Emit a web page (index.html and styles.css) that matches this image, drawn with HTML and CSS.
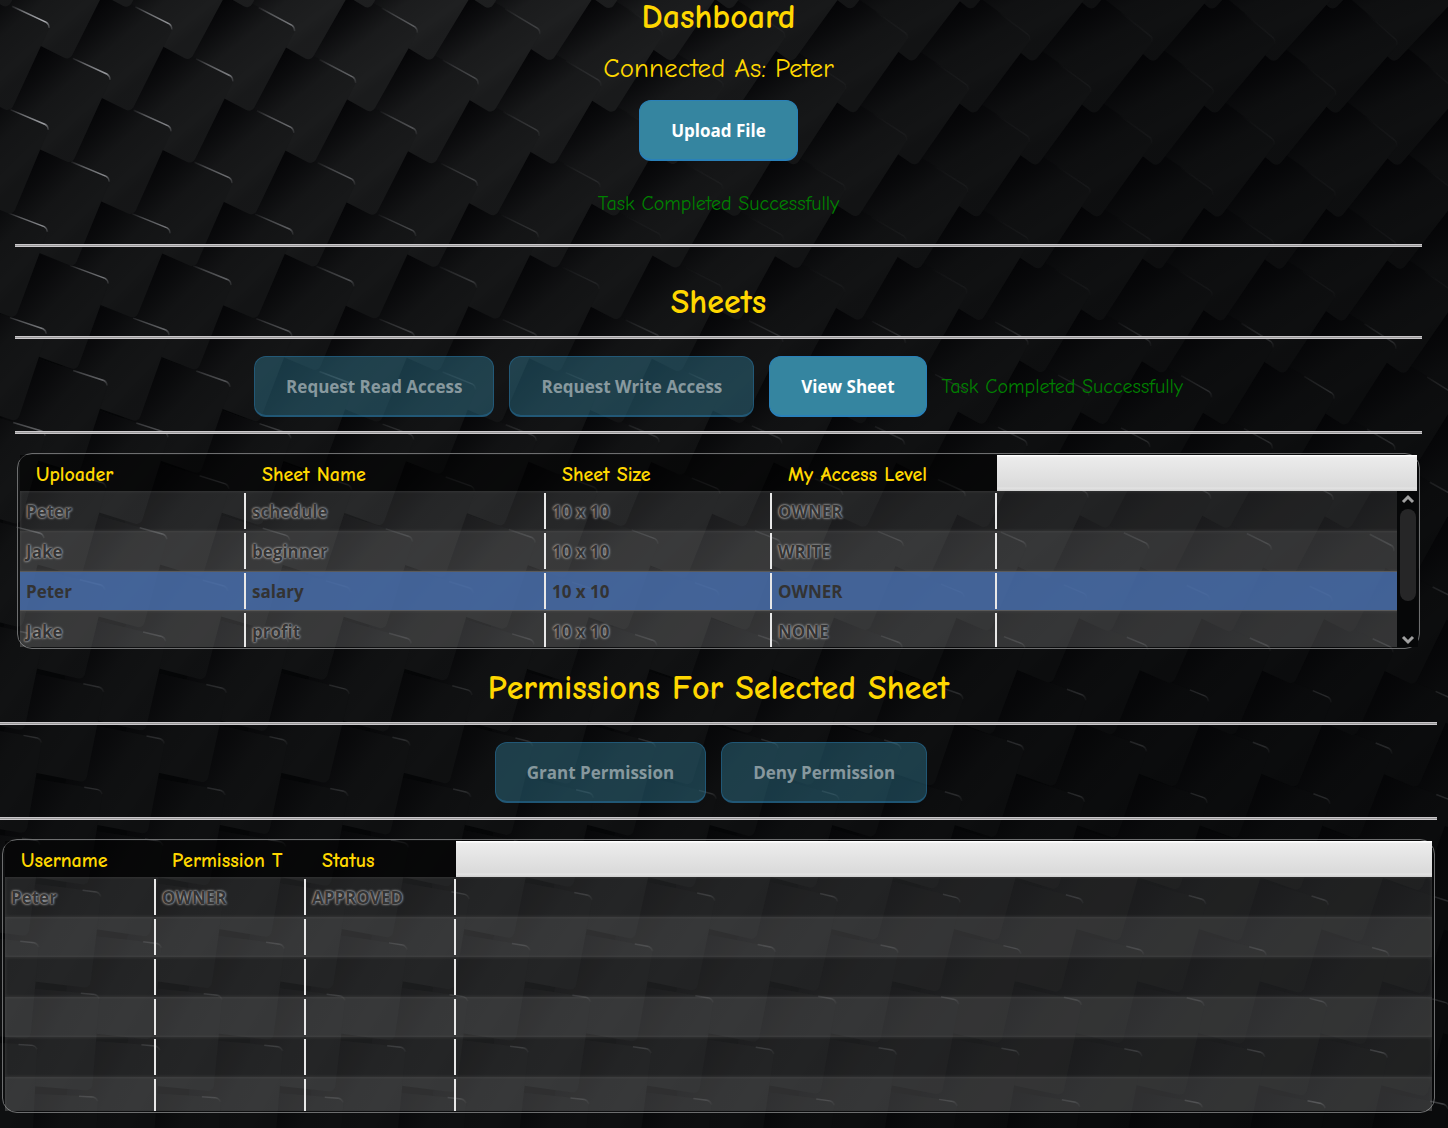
FILE: index.html
```html
<!DOCTYPE html>
<html lang="en">
<head>
<meta charset="utf-8">
<title>Dashboard</title>
<link rel="stylesheet" href="styles.css">
</head>
<body>
<svg class="backdrop" aria-hidden="true">
  <defs>
    <linearGradient id="shade" x1="0.15" y1="0.1" x2="1" y2="0.5">
      <stop offset="0" stop-color="#020204" stop-opacity="0.95"/>
      <stop offset="0.22" stop-color="#020204" stop-opacity="0.65"/>
      <stop offset="0.5" stop-color="#020204" stop-opacity="0.14"/>
      <stop offset="0.85" stop-color="#020204" stop-opacity="0"/>
      <stop offset="1" stop-color="#020204" stop-opacity="0.12"/>
    </linearGradient>
    <linearGradient id="glint" gradientUnits="userSpaceOnUse" x1="0" y1="0" x2="43" y2="0">
      <stop offset="0" stop-color="#d5d7dd" stop-opacity="0.1"/>
      <stop offset="0.3" stop-color="#d5d7dd" stop-opacity="0.6"/>
      <stop offset="0.85" stop-color="#d5d7dd" stop-opacity="1"/>
      <stop offset="1" stop-color="#d5d7dd" stop-opacity="0.2"/>
    </linearGradient>
  </defs>
</svg>
<main class="page">
  <header class="intro">
    <h1 class="title">Dashboard</h1>
    <p class="connected">Connected As: Peter</p>
    <button class="btn" type="button">Upload File</button>
    <p class="status">Task Completed Successfully</p>
  </header>

  <section class="sheets">
    <hr class="rule">
    <h2 class="title title-sheets">Sheets</h2>
    <hr class="rule">
    <div class="actions">
      <button class="btn" type="button" disabled>Request Read Access</button>
      <button class="btn" type="button" disabled>Request Write Access</button>
      <button class="btn" type="button">View Sheet</button>
      <p class="status">Task Completed Successfully</p>
    </div>
    <hr class="rule">
    <div class="panel panel-sheets">
      <div class="viewport viewport-short">
        <table class="grid">
          <colgroup><col class="c226"><col class="c300"><col class="c226"><col class="c225"><col></colgroup>
          <thead><tr><th>Uploader</th><th>Sheet Name</th><th>Sheet Size</th><th>My Access Level</th><td class="filler"></td></tr></thead>
          <tbody>
            <tr><td>Peter</td><td>schedule</td><td>10 x 10</td><td>OWNER</td><td></td></tr>
            <tr><td>Jake</td><td>beginner</td><td>10 x 10</td><td>WRITE</td><td></td></tr>
            <tr class="selected"><td>Peter</td><td>salary</td><td>10 x 10</td><td>OWNER</td><td></td></tr>
            <tr><td>Jake</td><td>profit</td><td>10 x 10</td><td>NONE</td><td></td></tr>
          </tbody>
        </table>
      </div>
      <div class="scrollbar" aria-hidden="true">
        <svg class="arrow" viewBox="0 0 14 10"><path d="M2 8 L7 3 L12 8"/></svg>
        <span class="thumb"></span>
        <svg class="arrow" viewBox="0 0 14 10"><path d="M2 2 L7 7 L12 2"/></svg>
      </div>
    </div>
  </section>

  <section class="permissions">
    <h2 class="title title-permissions">Permissions For Selected Sheet</h2>
    <hr class="rule">
    <div class="actions actions-permissions">
      <button class="btn" type="button" disabled>Grant Permission</button>
      <button class="btn" type="button" disabled>Deny Permission</button>
    </div>
    <hr class="rule">
    <div class="panel">
      <div class="viewport viewport-tall">
        <table class="grid">
          <colgroup><col class="c151"><col class="c150"><col class="c150"><col></colgroup>
          <thead><tr><th>Username</th><th>Permission T</th><th>Status</th><td class="filler"></td></tr></thead>
          <tbody>
            <tr><td>Peter</td><td>OWNER</td><td>APPROVED</td><td></td></tr>
            <tr><td></td><td></td><td></td><td></td></tr>
            <tr><td></td><td></td><td></td><td></td></tr>
            <tr><td></td><td></td><td></td><td></td></tr>
            <tr><td></td><td></td><td></td><td></td></tr>
            <tr><td></td><td></td><td></td><td></td></tr>
          </tbody>
        </table>
      </div>
    </div>
  </section>
</main>
<script src="backdrop.js"></script>
</body>
</html>
```
FILE: styles.css
```css
* { box-sizing: border-box; }

body {
  margin: 0;
  min-height: 100vh;
  background: #050607;
  color: #333;
  font-family: "Segoe UI", "Open Sans", "Noto Sans", sans-serif;
  position: relative;
  overflow-x: hidden;
}

.backdrop {
  position: absolute;
  inset: 0;
  width: 100%;
  height: 100%;
  z-index: -1;
}

.page { padding-right: 11px; padding-bottom: 15px; }

.intro {
  display: flex;
  flex-direction: column;
  align-items: center;
}

.title, .connected, .status, .grid th {
  font-family: "Comic Sans MS", "Comic Neue", "Noto Sans", sans-serif;
}

.title {
  margin: 0;
  color: gold;
  font-size: 34px;
  font-weight: 700;
  line-height: 34px;
  text-align: center;
}

.connected {
  margin: 19px 0 15px;
  color: gold;
  font-size: 27px;
  line-height: 32px;
}

.status {
  margin: 0;
  color: #008000;
  font-size: 20px;
  line-height: 24px;
}

.intro .status { margin: 31px 0 28px; }

.btn {
  height: 61px;
  padding: 2px 31px 0;
  border: 1px solid #2980b9;
  border-bottom-width: 2px;
  border-radius: 12px;
  background: #3585a0;
  color: #fff;
  font: 700 17px/24px "Segoe UI", "Open Sans", "Noto Sans", sans-serif;
}

.btn:disabled {
  border-color: rgba(41, 128, 185, 0.4);
  background: rgba(53, 133, 160, 0.4);
  color: rgba(255, 255, 255, 0.48);
}

.rule {
  height: 3px;
  margin: 0;
  border: solid #cac7ca;
  border-width: 1px 0;
  background: #999;
}

.sheets { padding: 0 0 0 15px; margin-right: 15px; }

.title-sheets { padding: 38px 0 17px; }

.actions {
  display: flex;
  justify-content: center;
  align-items: center;
  gap: 15px;
  padding: 17px 0 14px;
}

.actions-permissions { padding-right: 15px; }

.title-permissions { padding: 22px 0 17px; }

.panel {
  position: relative;
  margin: 19px 2px 0;
  padding: 1px 2px 1px 2px;
  border: 1px solid #6d6e6f;
  border-radius: 15px;
}

.viewport { overflow: hidden; }
.viewport-short { height: 192px; }
.viewport-tall { height: 270px; }

.grid {
  width: 100%;
  table-layout: fixed;
  border-collapse: collapse;
}

.c150 { width: 150px; }
.c151 { width: 151px; }
.c225 { width: 225px; }
.c226 { width: 226px; }
.c300 { width: 300px; }

.grid th {
  height: 36px;
  padding: 4px 0 0 16px;
  background: rgba(0, 0, 0, 0.5);
  color: gold;
  font-size: 20px;
  line-height: 24px;
  text-align: left;
  white-space: nowrap;
}

.grid .filler {
  background: linear-gradient(#fff 0 1px, #ececec 2px, #dadada 32px, #e4e4e4 33px, #cfcfcf 36px);
}

.grid tbody td {
  height: 40px;
  padding: 2px 0 0 6px;
  font-size: 17px;
  font-weight: 700;
  line-height: 24px;
  text-shadow: 0 0 2px #bbb, 0 0 3px #aaa;
}

.grid tbody td:not(:last-child) {
  background: linear-gradient(#e8e8e8, #e8e8e8) right center / 2px calc(100% - 4px) no-repeat;
}

.grid tbody tr {
  background: rgba(255, 255, 255, 0.09);
  box-shadow: inset 0 0 3px 1px rgba(90, 90, 90, 0.3);
}

.grid tbody tr:nth-child(even) { background: rgba(255, 255, 255, 0.17); }

.grid tbody tr.selected {
  background: rgba(78, 116, 178, 0.84);
  box-shadow: inset 0 1px #5a5a5a, inset 0 -1px #5a5a5a;
}

.grid tbody tr.selected td { text-shadow: none; }

/* The scroll track lies over the right end of the rows. */
.scrollbar {
  position: absolute;
  top: 37px;
  right: 1px;
  bottom: 1px;
  width: 21px;
  padding: 3px 0 2px;
  display: flex;
  flex-direction: column;
  align-items: center;
  gap: 5px;
  background: #060708;
}

.arrow {
  width: 14px;
  height: 10px;
  fill: none;
  stroke: #a0a0a0;
  stroke-width: 3;
}

.thumb {
  width: 16px;
  height: 92px;
  border-radius: 8px;
  background: #262627;
}

.scrollbar .arrow:last-child { margin-top: auto; }

.backdrop .edge { fill: none; stroke: url(#glint); stroke-width: 1.5; }
```
FILE: backdrop.js
```javascript
// Overlapping dark tiles whose tilt and light change across the window.
(function () {
  const NS = "http://www.w3.org/2000/svg";
  const svg = document.querySelector(".backdrop");
  const width = document.documentElement.clientWidth;
  const height = document.documentElement.scrollHeight;
  const W = 90, H = 97;

  function add(parent, name, attrs) {
    const node = document.createElementNS(NS, name);
    for (const key in attrs) node.setAttribute(key, attrs[key]);
    parent.appendChild(node);
    return node;
  }

  function tile(cx, cy) {
    const angle = 26 - 0.021 * cy + cx * (0.0125 - 0.005 * cy / 1000);
    const fade = Math.max(0.15, 1 - cy / 1100);
    const hot = Math.exp(-Math.pow((cx - 430) / 350, 2)) * Math.max(0, 1 - cy / 260);
    const side = cx > 650 ? Math.max(0.68, 1 - (cx - 650) / 1500) : 1;
    const level = Math.round((13 + 10 * fade) * side + 8 * hot);
    const g = add(svg, "g", { transform: `translate(${cx} ${cy}) rotate(${angle})` });
    const box = { x: -W / 2, y: -H / 2, width: W, height: H, rx: 6 };
    add(g, "rect", { ...box, fill: `rgb(${level},${level + 1},${level + 2})` });
    add(g, "rect", { ...box, fill: "url(#shade)", opacity: 0.6 + 0.35 * fade });
    const glow = (0.85 - cx / 750) * (1 - cy / 900);
    const low = cy > 350 ? 0.15 : 0.04;
    const start = Math.min(24, Math.max(0, (cy - 300) / 20));
    const edge = add(g, "g", { transform: `translate(2 ${-H / 2 + 0.5})`, opacity: Math.max(glow, low) });
    add(edge, "path", { class: "edge", d: `M${start} 0 L38 0.2 Q41 0.5 43 4` });
  }

  // Left columns cover right ones; in a column the upper tile is on top.
  for (let i = Math.ceil(width / 61) + 2; i >= -1; i--) {
    const shift = i % 2 ? -52 : 0;
    for (let j = Math.ceil(height / 104) + 1; j >= -1; j--) {
      tile(-10 + i * 61.1, 49 + shift + j * 104.2);
    }
  }
})();
```
